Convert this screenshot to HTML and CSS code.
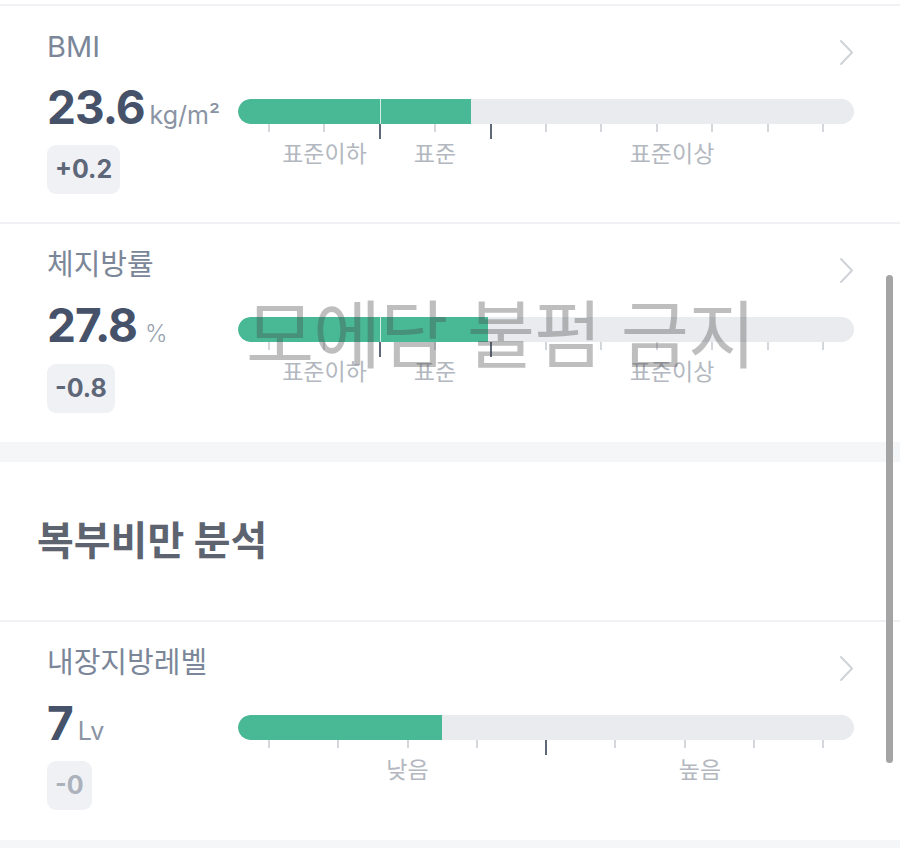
FILE: index.html
```html
<!DOCTYPE html>
<html lang="ko">
<head>
    <meta charset="UTF-8">
    <meta name="viewport" content="width=device-width, initial-scale=1.0">
    <title>체성분 분석</title>
    <link rel="stylesheet" href="styles.css">
</head>
<body>
    <div class="list">
        <!-- BMI -->
        <section class="metric">
            <div class="metric-head">
                <span class="metric-name">BMI</span>
                <svg class="chevron" viewBox="0 0 15 27" width="15" height="27"><polyline points="2,2 13,13.5 2,25"/></svg>
            </div>
            <div class="metric-body">
                <div class="metric-left">
                    <div class="metric-value"><b>23.6</b><span class="unit">kg/m²</span></div>
                    <span class="delta">+0.2</span>
                </div>
                <div class="scale">
                    <div class="bar">
                        <div class="fill" style="width:37.8%"></div>
                        <i class="split" style="left:23.05%"></i>
                    </div>
                    <div class="ticks">
                        <i></i><i></i><i class="major"></i><i></i><i class="major"></i><i></i><i></i><i></i><i></i><i></i><i></i>
                    </div>
                    <div class="labels">
                        <span style="width:111px">표준이하</span>
                        <span style="width:110px">표준</span>
                        <span style="width:364px">표준이상</span>
                    </div>
                </div>
            </div>
        </section>

        <!-- 체지방률 -->
        <section class="metric">
            <div class="metric-head">
                <span class="metric-name">체지방률</span>
                <svg class="chevron" viewBox="0 0 15 27" width="15" height="27"><polyline points="2,2 13,13.5 2,25"/></svg>
            </div>
            <div class="metric-body">
                <div class="metric-left">
                    <div class="metric-value"><b>27.8</b><span class="unit small">%</span></div>
                    <span class="delta">-0.8</span>
                </div>
                <div class="scale">
                    <div class="bar">
                        <div class="fill" style="width:40.6%"></div>
                        <i class="split" style="left:23.05%"></i>
                    </div>
                    <div class="ticks">
                        <i></i><i></i><i class="major"></i><i></i><i class="major"></i><i></i><i></i><i></i><i></i><i></i><i></i>
                    </div>
                    <div class="labels">
                        <span style="width:111px">표준이하</span>
                        <span style="width:110px">표준</span>
                        <span style="width:364px">표준이상</span>
                    </div>
                </div>
            </div>
        </section>
    </div>

    <div class="gap"></div>

    <h2 class="group-title">복부비만 분석</h2>

    <div class="list">
        <!-- 내장지방레벨 -->
        <section class="metric">
            <div class="metric-head">
                <span class="metric-name">내장지방레벨</span>
                <svg class="chevron" viewBox="0 0 15 27" width="15" height="27"><polyline points="2,2 13,13.5 2,25"/></svg>
            </div>
            <div class="metric-body">
                <div class="metric-left">
                    <div class="metric-value"><b>7</b><span class="unit">Lv</span></div>
                    <span class="delta zero">-0</span>
                </div>
                <div class="scale">
                    <div class="bar">
                        <div class="fill" style="width:33.1%"></div>
                    </div>
                    <div class="ticks">
                        <i></i><i></i><i></i><i></i><i class="major"></i><i></i><i></i><i></i><i></i>
                    </div>
                    <div class="labels">
                        <span style="width:277px">낮음</span>
                        <span style="width:308px">높음</span>
                    </div>
                </div>
            </div>
        </section>
    </div>

    <div class="watermark">모에담 불펌 금지</div>
    <div class="scrollbar"></div>
</body>
</html>
```

FILE: styles.css
```css
body{
    margin: 0;
    background-color: #f4f6f8;
    font-family: Inter, "Noto Sans CJK KR", sans-serif;
    overflow: hidden;
}
.list{
    background-color: #fff;
    border-top: 2px solid #f0f1f4;
}
body > .list:first-child{
    margin-top: 4px;
    box-shadow: 0 -4px 0 #fff;
}
.metric{
    height: 218px;
    box-sizing: border-box;
    padding: 21px 46px 0 47px;
    border-bottom: 2px solid #f0f1f4;
    background-color: #fff;
}
.list .metric:last-child{
    border-bottom: none;
}
.metric-head{
    display: flex;
    justify-content: space-between;
    align-items: center;
    height: 40px;
}
.metric-name{
    font-size: 29px;
    line-height: 40px;
    color: #7b8799;
}
.chevron{
    margin-top: 11px;
    fill: none;
    stroke: #cfd2d7;
    stroke-width: 2;
    stroke-linecap: round;
    stroke-linejoin: round;
}
.metric-body{
    display: flex;
}
.metric-left{
    width: 191px;
    display: flex;
    flex-direction: column;
    align-items: flex-start;
    padding-top: 16px;
}
.metric-value{
    display: flex;
    align-items: baseline;
    gap: 5px;
    line-height: 48px;
    color: #465269;
}
.metric-value b{
    font-size: 46px;
    font-weight: 700;
    letter-spacing: -1px;
}
.unit{
    font-size: 25px;
    color: #8a94a3;
}
.unit.small{
    margin-left: 3px;
    font-size: 24px;
    font-weight: 300;
    color: #9aa3b0;
}
.delta{
    margin-top: 6px;
    height: 49px;
    line-height: 49px;
    padding: 0 8px;
    border-radius: 9px;
    background-color: #eff1f4;
    font-size: 25px;
    font-weight: 700;
    color: #5d6778;
}
.delta.zero{
    color: #abb2bc;
}
.scale{
    flex: 1;
    padding-top: 32px;
}
.bar{
    position: relative;
    height: 25px;
    border-radius: 12.5px;
    background-color: #e9ebef;
    overflow: hidden;
}
.fill{
    height: 100%;
    background-color: #49b995;
    border-radius: 12.5px 0 0 12.5px;
}
.split{
    position: absolute;
    top: 0;
    bottom: 0;
    width: 1.5px;
    background-color: rgba(255, 255, 255, 0.75);
}
.ticks{
    display: flex;
    justify-content: space-between;
    align-items: flex-start;
    height: 15px;
    padding: 0 30px;
}
.ticks i{
    width: 2px;
    height: 8px;
    background-color: #d3d6db;
}
.ticks i.major{
    height: 15px;
    background-color: #5f6879;
}
.labels{
    display: flex;
    margin-top: 1px;
    padding-left: 31px;
}
.labels span{
    flex: none;
    text-align: center;
    font-size: 23px;
    line-height: 28px;
    color: #b3b8c0;
}
.gap{
    height: 20px;
}
.group-title{
    margin: 0;
    height: 158px;
    padding-left: 37px;
    background-color: #fff;
    font-size: 40px;
    font-weight: 700;
    line-height: 158px;
    color: #5d6470;
}
.watermark{
    position: absolute;
    left: 246px;
    top: 285px;
    font-family: "Noto Sans CJK KR", sans-serif;
    font-size: 74px;
    font-weight: 400;
    line-height: 90px;
    letter-spacing: -1px;
    color: rgba(70, 70, 70, 0.35);
    pointer-events: none;
    white-space: nowrap;
}
.scrollbar{
    position: absolute;
    left: 886px;
    top: 275px;
    width: 7px;
    height: 488px;
    border-radius: 4px;
    background-color: #a4a4a4;
}
```
